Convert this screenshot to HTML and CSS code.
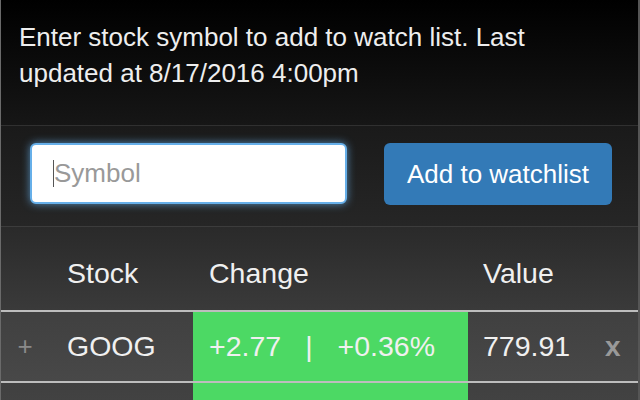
FILE: index.html
```html
<!DOCTYPE html>
<html lang="en">
<head>
    <meta charset="UTF-8">
    <meta name="viewport" content="width=device-width, initial-scale=1.0">
    <title>Stock Watchlist</title>
    <link rel="stylesheet" href="styles.css">
</head>
<body>
    <div class="panel">
        <div class="intro">
            Enter stock symbol to add to watch list. Last updated at 8/17/2016 4:00pm
        </div>

        <form class="add-form">
            <div class="symbol-wrap">
                <input type="text" class="symbol-input" placeholder="Symbol">
            </div>
            <button type="submit" class="add-btn">Add to watchlist</button>
        </form>

        <table class="watchlist">
            <thead>
                <tr>
                    <th class="col-expand"></th>
                    <th class="col-stock">Stock</th>
                    <th class="col-change">Change</th>
                    <th class="col-value">Value</th>
                    <th class="col-remove"></th>
                </tr>
            </thead>
            <tbody>
                <tr>
                    <td class="col-expand">+</td>
                    <td class="col-stock">GOOG</td>
                    <td class="col-change up">
                        <span>+2.77</span><span class="sep">|</span><span>+0.36%</span>
                    </td>
                    <td class="col-value">779.91</td>
                    <td class="col-remove">x</td>
                </tr>
                <tr>
                    <td class="col-expand"></td>
                    <td class="col-stock"></td>
                    <td class="col-change up"></td>
                    <td class="col-value"></td>
                    <td class="col-remove"></td>
                </tr>
            </tbody>
        </table>
    </div>
</body>
</html>
```

FILE: styles.css
```css
body {
    margin: 0;
    background: #2a2a2a;
    font-family: "Liberation Sans", Arial, sans-serif;
    color: #f0f0f0;
    height: 400px;
    overflow: hidden;
}
.panel {
    width: 640px;
    box-sizing: border-box;
    border-left: 1px solid #6a6a6a;
    border-right: 2px solid #555;
}
.intro {
    height: 126px;
    box-sizing: border-box;
    padding: 19px 20px 0 18px;
    font-size: 26px;
    line-height: 36px;
    color: #eee;
    background: linear-gradient(#000, #161616);
    border-bottom: 1px solid #303030;
}
.add-form {
    display: flex;
    align-items: flex-start;
    gap: 37px;
    height: 101px;
    box-sizing: border-box;
    padding: 17px 0 0 29px;
    background: linear-gradient(#1a1a1a, #262626);
    border-bottom: 1px solid #3c3c3c;
}
.symbol-wrap {
    position: relative;
}
.symbol-wrap::before {
    content: "";
    position: absolute;
    left: 23px;
    top: 17px;
    width: 1px;
    height: 27px;
    background: #555;
}
.symbol-input {
    width: 317px;
    height: 61px;
    box-sizing: border-box;
    padding: 0 0 0 22px;
    border: 2px solid #66afe9;
    border-radius: 6px;
    box-shadow: 0 0 9px rgba(102, 175, 233, 0.75);
    font-family: inherit;
    font-size: 26px;
    outline: none;
}
.symbol-input::placeholder {
    color: #999;
}
.add-btn {
    width: 228px;
    height: 62px;
    border: none;
    border-radius: 6px;
    background-color: #337ab7;
    color: #fff;
    font-family: inherit;
    font-size: 26px;
    cursor: pointer;
}
.watchlist {
    width: 100%;
    border-collapse: collapse;
    table-layout: fixed;
    font-size: 28.5px;
}
.watchlist th,
.watchlist td {
    box-sizing: border-box;
    padding: 0;
    white-space: nowrap;
}
.watchlist th {
    height: 84px;
    padding-top: 10px;
    font-weight: normal;
    text-align: left;
    background: linear-gradient(#2a2a2a, #3a3a3a);
    border-bottom: 2px solid #bdbdbd;
}
.watchlist td {
    height: 71px;
    background: linear-gradient(#404040, #484848);
    border-bottom: 2px solid #bdbdbd;
}
.col-expand {
    width: 48px;
    text-align: center;
    color: #8a8a8a;
}
.watchlist td.col-expand {
    font-size: 26px;
}
.watchlist .col-stock {
    width: 144px;
    padding-left: 18px;
}
.watchlist .col-change {
    width: 275px;
    padding-left: 16px;
}
.watchlist td.up {
    background: #4cd964;
}
.sep {
    margin: 0 25px 0 24px;
}
.watchlist .col-value {
    width: 123px;
    padding-left: 15px;
}
.watchlist td.col-remove {
    color: #999;
    font-size: 28px;
    font-weight: bold;
    padding-left: 14px;
}
```
